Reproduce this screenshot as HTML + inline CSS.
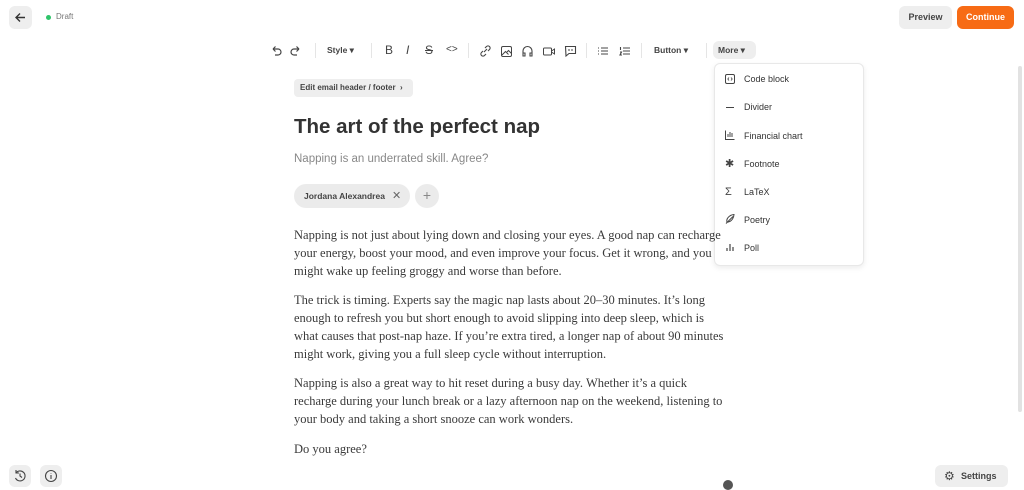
<!DOCTYPE html>
<html><head><meta charset="utf-8"><style>
*{box-sizing:border-box;margin:0;padding:0}
body{width:1024px;height:485px;overflow:hidden;background:#fff;font-family:"Liberation Sans",sans-serif;color:#333;position:relative}
.abs{position:absolute}
.btn{position:absolute;background:#eee;border-radius:6px}
svg{display:block}
.tb{position:absolute;top:44px;height:14px}
.tbt{position:absolute;top:45px;font-size:8.5px;font-weight:bold;color:#444}
.sep{position:absolute;top:43px;width:1px;height:15px;background:#e5e5e5}
.mi{position:absolute;left:744px;font-size:9px;color:#333}
.p{position:absolute;left:294px;width:436px;font-family:"Liberation Serif",serif;font-size:12.5px;line-height:18px;color:#3a3a3a}
</style></head><body>
<div class="btn" style="left:9px;top:6px;width:23px;height:23px"><svg width="23" height="23" viewBox="0 0 23 23"><path d="M16 11.5H7M11 7.5l-4 4 4 4" stroke="#333" stroke-width="1.4" fill="none"/></svg></div>
<div class="abs" style="left:46px;top:15px;width:5px;height:5px;border-radius:50%;background:#2fc46a"></div>
<div class="abs" style="left:56px;top:12px;font-size:8px;color:#777">Draft</div>
<div class="btn" style="left:899px;top:6px;width:53px;height:23px;font-size:9px;font-weight:bold;color:#444;text-align:center;line-height:23px">Preview</div>
<div class="abs" style="left:957px;top:6px;width:57px;height:23px;border-radius:6px;background:#f76b15;font-size:9px;font-weight:bold;color:#fff;text-align:center;line-height:23px">Continue</div>

<svg class="tb" style="left:270px" width="12" height="14" viewBox="0 0 12 14"><path d="M3 5h5a3 3 0 010 6H5M3 5l2.5-2.5M3 5l2.5 2.5" stroke="#444" stroke-width="1.2" fill="none"/></svg>
<svg class="tb" style="left:290px" width="12" height="14" viewBox="0 0 12 14"><path d="M9 5H4a3 3 0 000 6h3M9 5L6.5 2.5M9 5L6.5 7.5" stroke="#444" stroke-width="1.2" fill="none"/></svg>
<div class="sep" style="left:315px"></div>
<div class="tbt" style="left:327px">Style ▾</div>
<div class="sep" style="left:371px"></div>
<div class="tbt" style="left:385px;font-size:12px;top:43px;font-weight:normal">B</div>
<div class="tbt" style="left:406px;font-size:12px;top:43px;font-weight:normal;font-style:italic">I</div>
<div class="tbt" style="left:425px;font-size:12px;top:43px;font-weight:normal;text-decoration:line-through">S</div>
<div class="tbt" style="left:446px;font-size:10px;top:44px;font-weight:normal">&lt;&gt;</div>
<div class="sep" style="left:468px"></div>
<svg class="tb" style="left:479px" width="13" height="14" viewBox="0 0 13 14"><path d="M5 8l3-3M6 4l1.5-1.5a2 2 0 013 3L9 7M7 10l-1.5 1.5a2 2 0 01-3-3L4 7" stroke="#444" stroke-width="1.1" fill="none"/></svg>
<svg class="tb" style="left:500px" width="13" height="14" viewBox="0 0 13 14"><rect x="1.5" y="2.5" width="10" height="10" rx="1.5" stroke="#444" fill="none"/><path d="M2 11l3.5-3.5 3 3M7 8l1.5-1.5 3 3" stroke="#444" fill="none"/></svg>
<svg class="tb" style="left:521px" width="13" height="14" viewBox="0 0 13 14"><path d="M2 10V7a4.5 4.5 0 019 0v3M2 9h2v3H2zM9 9h2v3H9z" stroke="#444" stroke-width="1.1" fill="none"/></svg>
<svg class="tb" style="left:542px" width="14" height="14" viewBox="0 0 14 14"><rect x="1.5" y="4" width="8" height="7" rx="1" stroke="#444" fill="none"/><path d="M9.5 7l3-2v5l-3-2" stroke="#444" fill="none"/></svg>
<svg class="tb" style="left:564px" width="13" height="14" viewBox="0 0 13 14"><path d="M1.5 2.5h10v7H5l-3 2.5z" stroke="#444" stroke-width="1.1" fill="none"/><path d="M5 5v2M8 5v2" stroke="#444"/></svg>
<div class="sep" style="left:586px"></div>
<svg class="tb" style="left:597px" width="12" height="14" viewBox="0 0 12 14"><path d="M1 4h1M1 7h1M1 10h1M4 4h7M4 7h7M4 10h7" stroke="#444" stroke-width="1.1"/></svg>
<svg class="tb" style="left:619px" width="12" height="14" viewBox="0 0 12 14"><path d="M1.5 3v3M1 8h1.5L1 11h2M4 4h7M4 7h7M4 10h7" stroke="#444" stroke-width="1.1" fill="none"/></svg>
<div class="sep" style="left:641px"></div>
<div class="tbt" style="left:654px">Button ▾</div>
<div class="sep" style="left:706px"></div>
<div class="btn" style="left:713px;top:41px;width:43px;height:18px;font-size:8.5px;font-weight:bold;color:#444;line-height:18px;padding-left:5px">More ▾</div>

<div class="abs" style="left:714px;top:63px;width:150px;height:203px;border:1px solid #e8e8e8;border-radius:6px;background:#fff;box-shadow:0 2px 6px rgba(0,0,0,.08)"></div>
<svg class="abs" style="left:724px;top:73px" width="12" height="12" viewBox="0 0 12 12"><rect x="1.5" y="1.5" width="9" height="9" rx="1.5" stroke="#444" fill="none"/><path d="M5 4.5L3.8 6 5 7.5M7 4.5L8.2 6 7 7.5" stroke="#444" stroke-width=".8" fill="none"/></svg>
<div class="mi" style="top:74px">Code block</div>
<div class="abs" style="left:726px;top:107px;width:8px;height:1.2px;background:#444"></div>
<div class="mi" style="top:102px">Divider</div>
<svg class="abs" style="left:724px;top:129px" width="12" height="12" viewBox="0 0 12 12"><path d="M1.5 1.5v9h9M4 8V5M6 8V3M8 8V4" stroke="#444" fill="none"/></svg>
<div class="mi" style="top:131px">Financial chart</div>
<div class="abs" style="left:725px;top:157px;font-size:11px;color:#444">✱</div>
<div class="mi" style="top:159px">Footnote</div>
<div class="abs" style="left:725px;top:186px;font-size:11px;color:#444">Σ</div>
<div class="mi" style="top:187px">LaTeX</div>
<svg class="abs" style="left:724px;top:213px" width="12" height="12" viewBox="0 0 12 12"><path d="M2 10.5L9 3.5M3 9c-1-3 2-7 7-7.5-.5 5-4 8-7 7.5" stroke="#444" fill="none"/></svg>
<div class="mi" style="top:215px">Poetry</div>
<svg class="abs" style="left:724px;top:241px" width="12" height="12" viewBox="0 0 12 12"><path d="M3 10V7M6 10V3M9 10V6" stroke="#444" stroke-width="1.2"/></svg>
<div class="mi" style="top:243px">Poll</div>

<div class="btn" style="left:294px;top:79px;width:119px;height:18px;border-radius:4px;font-size:8px;font-weight:bold;color:#444;line-height:18px;padding-left:6px">Edit email header / footer&nbsp;&nbsp;›</div>
<div class="abs" style="left:294px;top:115px;font-size:20.5px;font-weight:bold;color:#333">The art of the perfect nap</div>
<div class="abs" style="left:294px;top:153px;font-size:11.5px;color:#888">Napping is an underrated skill. Agree?</div>
<div class="abs" style="left:294px;top:184px;width:116px;height:24px;border-radius:12px;background:#ebebeb;font-size:8.5px;font-weight:bold;color:#444;line-height:24px;padding-left:10px">Jordana Alexandrea&nbsp;&nbsp;&nbsp;<span style="font-weight:normal;font-size:11px;color:#666">✕</span></div>
<div class="abs" style="left:415px;top:184px;width:24px;height:24px;border-radius:50%;background:#ebebeb;color:#888;text-align:center;line-height:23px;font-size:14px">+</div>

<div class="p" style="top:226px">Napping is not just about lying down and closing your eyes. A good nap can recharge your energy, boost your mood, and even improve your focus. Get it wrong, and you might wake up feeling groggy and worse than before.</div>
<div class="p" style="top:291px">The trick is timing. Experts say the magic nap lasts about 20–30 minutes. It’s long enough to refresh you but short enough to avoid slipping into deep sleep, which is what causes that post-nap haze. If you’re extra tired, a longer nap of about 90 minutes might work, giving you a full sleep cycle without interruption.</div>
<div class="p" style="top:374px">Napping is also a great way to hit reset during a busy day. Whether it’s a quick recharge during your lunch break or a lazy afternoon nap on the weekend, listening to your body and taking a short snooze can work wonders.</div>
<div class="p" style="top:440px">Do you agree?</div>

<div class="abs" style="left:1018px;top:66px;width:4px;height:346px;border-radius:2px;background:#e2e2e2"></div>

<div class="btn" style="left:9px;top:465px;width:22px;height:22px"><svg width="22" height="22" viewBox="0 0 22 22"><path d="M7 8a5 5 0 11-.5 5M7 5v3h3M11 8.5V11l2 1.5" stroke="#444" stroke-width="1.1" fill="none"/></svg></div>
<div class="btn" style="left:40px;top:465px;width:22px;height:22px"><svg width="22" height="22" viewBox="0 0 22 22"><circle cx="11" cy="11" r="5.5" stroke="#444" stroke-width="1.1" fill="none"/><path d="M11 10v4M11 8v.5" stroke="#444" stroke-width="1.1"/></svg></div>
<div class="abs" style="left:723px;top:480px;width:10px;height:10px;border-radius:50%;background:#555"></div>
<div class="btn" style="left:935px;top:465px;width:73px;height:22px;font-size:9px;font-weight:bold;color:#444;line-height:22px;padding-left:26px">Settings</div>
<div class="abs" style="left:944px;top:469px;font-size:12px;color:#444">⚙</div>
</body></html>
